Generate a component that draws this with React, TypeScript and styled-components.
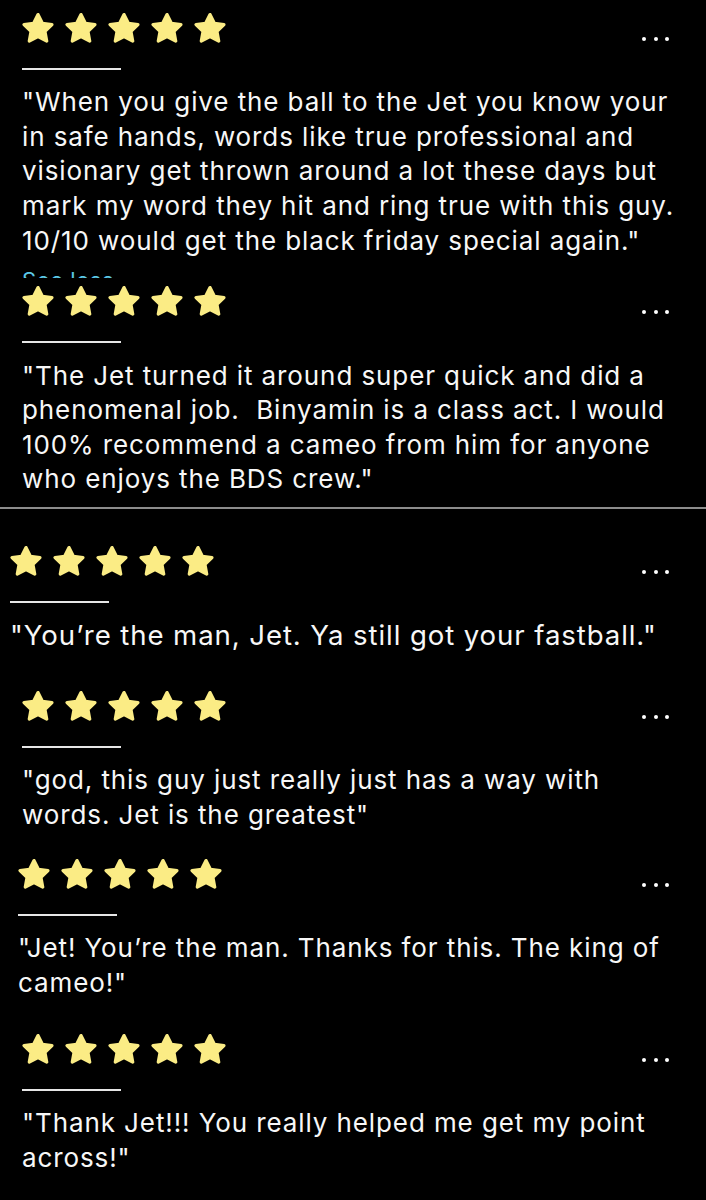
import React from "react";
import styled, { createGlobalStyle } from "styled-components";

const Global = createGlobalStyle`
  html, body { margin: 0; padding: 0; background: #000; }
  body { font-family: Inter, "Noto Sans", "Liberation Sans", sans-serif; }
  #root { width: 706px; height: 1200px; overflow: hidden; background: #000; }
`;

const Page = styled.main`
  display: flex;
  flex-direction: column;
  background: #000;
`;

const Card = styled.section<{ $indent: number; $top: number }>`
  display: flex;
  flex-direction: column;
  padding: ${(p) => p.$top}px 37px 0 ${(p) => p.$indent}px;
  background: #000;
`;

const Header = styled.div`
  display: flex;
  align-items: flex-end;
  justify-content: space-between;
  height: 31px;
`;

const Stars = styled.div`
  display: flex;
  gap: 11px;
`;

const StarSvg = styled.svg`
  width: 32px;
  height: 31px;
  display: block;
`;

const Dots = styled.div`
  display: flex;
  gap: 7.5px;
  margin-bottom: 2px;
`;

const Dot = styled.span`
  width: 4px;
  height: 4px;
  border-radius: 50%;
  background: #fff;
`;

const Rule = styled.div`
  width: 99px;
  height: 2px;
  margin-top: 25px;
  background: #e6e6e6;
`;

const Body = styled.p<{ $size: number }>`
  margin: 15.3px 0 0;
  font-size: ${(p) => p.$size}px;
  line-height: 34.6px;
  letter-spacing: 0.9px;
  color: #f7f7f7;
  white-space: pre;
`;

const SeeLessClip = styled.div`
  height: 20px;
  overflow: hidden;
  padding-left: 22px;
`;

const SeeLess = styled.span`
  display: block;
  padding-top: 11px;
  font-size: 22px;
  line-height: 22px;
  letter-spacing: 0.6px;
  color: #5cc8e6;
`;

const Separator = styled.hr`
  margin: 10px 0 0;
  border: none;
  height: 2px;
  background: #8c8c8c;
`;

const Star = () => (
  <StarSvg viewBox="1 1 22 21">
    <polygon
      points="12,2.6 15,8.6 21.6,9.5 16.8,14.2 18,20.8 12,17.7 6,20.8 7.2,14.2 2.4,9.5 9,8.6"
      fill="#fbec85"
      stroke="#fbec85"
      strokeWidth="2.2"
      strokeLinejoin="round"
    />
  </StarSvg>
);

type ReviewProps = { indent: number; top: number; lines: string[]; size?: number };

const Review = ({ indent, top, lines, size = 26 }: ReviewProps) => (
  <Card $indent={indent} $top={top}>
    <Header>
      <Stars>
        {[0, 1, 2, 3, 4].map((i) => (
          <Star key={i} />
        ))}
      </Stars>
      <Dots>
        <Dot />
        <Dot />
        <Dot />
      </Dots>
    </Header>
    <Rule />
    <Body $size={size}>{lines.join("\n")}</Body>
  </Card>
);

export default function App() {
  return (
    <Page>
      <Global />
      <Review
        indent={22}
        top={12}
        lines={[
          "\"When you give the ball to the Jet you know your",
          "in safe hands, words like true professional and",
          "visionary get thrown around a lot these days but",
          "mark my word they hit and ring true with this guy.",
          "10/10 would get the black friday special again.\"",
        ]}
      />
      <SeeLessClip>
        <SeeLess>See less</SeeLess>
      </SeeLessClip>
      <Review
        indent={22}
        top={7}
        lines={[
          "\"The Jet turned it around super quick and did a",
          "phenomenal job.  Binyamin is a class act. I would",
          "100% recommend a cameo from him for anyone",
          "who enjoys the BDS crew.\"",
        ]}
      />
      <Separator />
      <Review
        indent={10}
        top={36}
        size={27.6}
        lines={["\"You’re the man, Jet. Ya still got your fastball.\""]}
      />
      <Review
        indent={22}
        top={37}
        lines={[
          "\"god, this guy just really just has a way with",
          "words. Jet is the greatest\"",
        ]}
      />
      <Review
        indent={18}
        top={25.5}
        lines={[
          "\"Jet! You’re the man. Thanks for this. The king of",
          "cameo!\"",
        ]}
      />
      <Review
        indent={22}
        top={32.5}
        lines={[
          "\"Thank Jet!!! You really helped me get my point",
          "across!\"",
        ]}
      />
    </Page>
  );
}
